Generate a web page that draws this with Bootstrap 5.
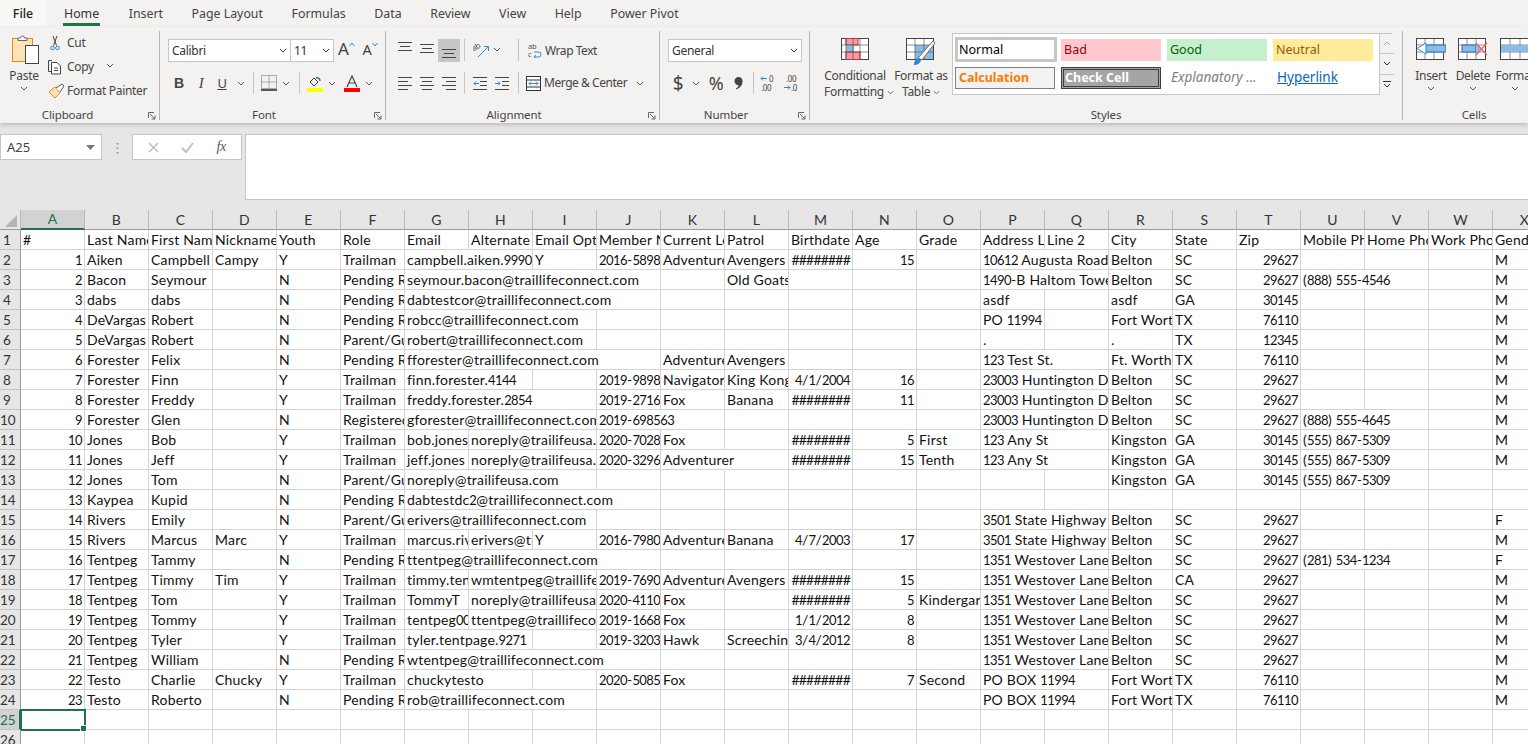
<!DOCTYPE html>
<html lang="en">
<head>
<meta charset="utf-8">
<title>Excel</title>
<link href="https://cdn.jsdelivr.net/npm/bootstrap@5.3.0/dist/css/bootstrap.min.css" rel="stylesheet">
<style>
html,body{height:744px;overflow:hidden}
body{background:#e6e6e6;font-family:"Noto Sans","Open Sans",sans-serif;font-size:12px;color:#444;letter-spacing:-.3px;line-height:16px}
svg{display:block;flex:none}
.tabs{height:27px;background:#f3f2f1;gap:28.6px;padding-left:63px;position:relative}
.tab{font-size:12.35px;letter-spacing:0;line-height:27px;height:26px;color:#444;white-space:nowrap}
.tab-file{margin-left:-63px;width:46px;text-align:center;background:#f9f8f7;color:#222;font-weight:500;margin-right:-11.600px}
.tab-home{border-bottom:3px solid #217346;height:26px;color:#333;padding:0 1px}
.ribbon{height:96px;background:#f3f2f1;box-shadow:0 2px 4px rgba(0,0,0,.18);padding-top:4px;position:relative}
.rg{position:relative;height:89px;border-right:1px solid #b8b6b4;flex:none}
.rg-clip{width:160px}.rg-font{width:226px}.rg-align{width:274px}.rg-num{width:150px}.rg-style{width:593px}.rg-cell{width:142px;border-right:0}
.cap{position:absolute;left:0;right:0;bottom:-3px;text-align:center;font-size:11.5px;letter-spacing:-.1px;line-height:16px;color:#444}
.cap-l{right:17px}.cap-c{right:24px}
.launch{position:absolute;right:3px;bottom:0}
.paste{width:48px;padding-top:4px;text-align:center}
.paste svg{margin:0 auto 2px 12px}
.paste svg.vchev{margin:2px auto 0}
.vchev{margin:2px auto 0}
.clip-list{padding-top:4px}
.clip-item{height:24px;gap:4px;white-space:nowrap}
.clip-item .slot{width:15px}
.fbox{background:#fff;border:1px solid #c8c6c4;height:23px;color:#333;line-height:21px;padding:0 3px;justify-content:space-between;align-items:center}
.b-font{width:123px;margin-left:8px}.b-size{width:43px;margin-left:0;border-left:0}
.b-gen{width:134px;margin-left:8px}
.row1{padding-top:8px;height:40px}
.row2{height:24px;align-items:center}
.ga-big{font-size:17px;line-height:20px;margin-left:4px;color:#444}
.ga-small{font-size:14.5px;line-height:20px;margin-left:8px;color:#444}
.ga-c{margin-top:3px}
.bold-b{font-weight:700;font-family:"Liberation Sans",sans-serif;font-size:14px;color:#444}
.it-i{font-style:italic;font-family:"Liberation Serif",serif;font-size:15px;color:#444}
.ul-u{text-decoration:underline;font-size:13px;color:#444}
.vsep{width:1px;height:22px;background:#c8c6c4;flex:none}
.font-tools{padding-left:8px}
.ft-b,.ft-i{width:22px;text-align:center}
.ft-u{width:20px;text-align:center}
.ft-c{margin-left:5px}
.ft-s{margin:0 7px 0 8px}
.ft-s2{margin:0 7px 0 9px}
.ft-a{margin-left:8px}
.sel-btn{background:#c6c6c6;width:22px;height:23px;justify-content:center}
.al-cell{width:22px;height:23px;align-items:center;justify-content:center}
.al-row{padding-left:8px}
.al-t{padding-top:3px;align-items:flex-start}
.al-m{padding-top:5px;align-items:flex-start}
.al-b{padding-top:10px;align-items:flex-start}
.al-s1{margin:0 8px 0 4px}
.al-ch{margin:8px 0 0 3px}
.al-s2{margin:0 9px 0 17px}
.al-s3{margin:0 7px 0 9px}
.al-wrap{height:23px;align-items:center;white-space:nowrap}
.al-txt{margin-left:3px;letter-spacing:-.45px}
.al-ch2{margin-left:9px}
.num-tools{padding-left:8px}
.nt-d{width:20px;text-align:center;font-size:19px;line-height:20px}
.nt-c{margin-left:4px}
.nt-p{width:24px;margin-left:4px;text-align:center;font-size:18px;line-height:20px}
.nt-k{width:20px}
.nt-k svg{margin:0 auto}
.nt-s{margin:0 6px 0 5px}
.nt-2{margin-left:7px}
.big{text-align:center;line-height:16px;white-space:nowrap;flex:none;padding-top:7px}
.big svg{margin:0 auto 8px}
.big svg.d-inline{margin:0 0 1px;display:inline}
.st-cf{width:62px;margin-left:14px}
.st-ft{width:62px;margin-left:4px}
.st-ft svg.tall{margin:0 auto 2px}
.cl-b{width:42px}
.cl-first{margin-left:7px}
.cl-b svg.vchev{margin:2px auto 0}
.gallery{width:440px;height:62px;background:#fff;border:1px solid #c8c6c4;margin-top:2px;position:relative}
.gcol{padding:3px 0 0 2px;gap:5px}
.gtile{width:100px;height:22px;line-height:21px;font-size:12.5px;letter-spacing:0;padding-left:3px;flex:none;white-space:nowrap;overflow:hidden;margin-right:6px}
.g-normal{height:25px;width:102px;border:3px solid #c6c6c6;color:#000;line-height:19px;margin-right:4px;margin-top:0;padding-left:1px}
.g-bad{background:#ffc7ce;color:#9c0006;margin-top:2px}
.g-good{background:#c6efce;color:#006100;margin-top:2px}
.g-neutral{background:#ffeb9c;color:#9c5700;margin-top:2px;margin-right:0}
.g-calc{background:#f2f2f2;border:1px solid #7f7f7f;color:#fa7d00;font-weight:700;line-height:19px}
.g-check{background:#a5a5a5;border:3px double #3f3f3f;color:#fff;font-weight:700;line-height:15px;padding-left:1px}
.g-expl{color:#7f7f7f;font-style:italic;font-size:13.5px;padding-left:4px}
.g-link{color:#0563c1;text-decoration:underline;font-size:13.5px;padding-left:4px}
.gscroll{width:15px;margin-left:auto;flex:none;border-left:1px solid #c8c6c4}
.gs{height:20.3px;background:#f3f2f1;border-bottom:1px solid #c8c6c4;display:flex;align-items:center;justify-content:center}
.gs:last-child{border-bottom:0}
.fbar{height:87px;padding-top:11px;flex:none}
.namebox{width:102px;height:26px;background:#fff;border:1px solid #c8c6c4;padding:0 6px;line-height:24px;font-size:13px;letter-spacing:0;color:#444;justify-content:space-between;align-items:center}
.fdots{width:30px;justify-content:center;padding-top:8px}
.fbtns{width:110px;height:26px;background:#fff;border:1px solid #c8c6c4;justify-content:space-around;align-items:center;padding:0 4px}
.fx{font-family:"Liberation Serif",serif;font-style:italic;font-size:14px;color:#555}
.finput{flex:1;height:66px;margin-left:3px;background:#fff;border:1px solid #c8c6c4;border-right:0}
.sheetwrap{overflow:hidden;height:534px;background:#fff;width:1528px}
.sheet{table-layout:fixed;width:1557px;border-collapse:separate;border-spacing:0;font-family:Lato,sans-serif;font-size:14px;letter-spacing:.2px;color:#111;line-height:18px}
.sheet col.rh{width:21px}.sheet col.cc{width:64px}
.sheet th{height:20px;background:#e6e6e6;font-weight:400;text-align:center;color:#333;border-right:1px solid #b9b9b9;border-bottom:1px solid #9c9c9c;padding:0;font-size:14px;overflow:hidden;position:relative}
.sheet tbody th{border-bottom:1px solid #c4c4c4;border-right:1px solid #9c9c9c;font-size:13.5px;letter-spacing:0;padding-right:6px}
.sheet td{height:20px;padding:0 3px 0 2px;border-right:1px solid #d4d4d4;border-bottom:1px solid #d4d4d4;white-space:nowrap;overflow:hidden;background:#fff}
.sheet td.num{text-align:right;padding-right:2px}
.dg{font-size:13px;letter-spacing:-.55px}
.sheet th.on{background:#d2d2d2;color:#217346}
.sheet thead th.on{border-bottom:2px solid #217346}
.sheet tbody th.on{border-right:2px solid #217346}
.sheet td.cur{outline:2px solid #217346;outline-offset:-1px;overflow:visible;position:relative}
.handle{position:absolute;right:-3px;bottom:-3px;background:#217346;border:1px solid #fff;box-sizing:content-box;width:5px;height:5px}
.corner{width:0;height:0;border-left:12px solid transparent;border-bottom:12px solid #b4b4b4;margin:3px 0 0 5px}
.hsh{letter-spacing:-.8px}
</style>
</head>
<body>
<div class="d-flex tabs">
  <div class="tab tab-file">File</div>
  <div class="tab tab-home">Home</div>
  <div class="tab">Insert</div>
  <div class="tab">Page Layout</div>
  <div class="tab">Formulas</div>
  <div class="tab">Data</div>
  <div class="tab">Review</div>
  <div class="tab">View</div>
  <div class="tab">Help</div>
  <div class="tab">Power Pivot</div>
</div>

<div class="d-flex ribbon">
  <!-- Clipboard -->
  <div class="rg rg-clip d-flex">
    <div class="paste">
      <svg width="28" height="31" viewBox="0 0 28 31"><rect x=".5" y="3.500" width="20" height="23" fill="#fbe3b5" stroke="#d98a2b"/><path d="M6 5.500V3h2.500a2 2 0 0 1 4 0H15v2.500z" fill="#fff" stroke="#666"/><rect x="13.500" y="10.500" width="13" height="18" fill="#fff" stroke="#444"/></svg>
      <div>Paste</div>
      <svg class="vchev" width="8" height="5" viewBox="0 0 8 5"><path d="M1 1l3 3 3-3" fill="none" stroke="#555"/></svg>
    </div>
    <div class="clip-list">
      <div class="d-flex clip-item"><span class="slot"><svg width="14" height="16" viewBox="0 0 14 16"><path d="M5 1l3.500 9.500M9 1L5.500 10.500" stroke="#444" fill="none"/><circle cx="4.500" cy="13" r="1.800" fill="none" stroke="#2b88d8"/><circle cx="9.500" cy="13" r="1.800" fill="none" stroke="#2b88d8"/></svg></span>Cut</div>
      <div class="d-flex clip-item"><span class="slot"><svg width="16" height="16" viewBox="0 0 16 16"><path d="M4 1.500H.5V12.500H3.500" fill="none" stroke="#444"/><path d="M3.500 3.500H9l3.500 3.500v8h-9z" fill="#fff" stroke="#444"/><path d="M6 9h4M6 11.500h4" stroke="#444"/></svg></span>Copy<svg class="ms-2 mt-1" width="8" height="5" viewBox="0 0 8 5"><path d="M1 1l3 3 3-3" fill="none" stroke="#555"/></svg></div>
      <div class="d-flex clip-item"><span class="slot"><svg width="17" height="16" viewBox="0 0 17 16"><path d="M1 9l6-5 5 6-5 5z" fill="#fbe3b5" stroke="#d98a2b"/><path d="M8 5l6-4 2 2-4 6" fill="#fff" stroke="#555"/></svg></span>Format Painter</div>
    </div>
    <div class="cap cap-c">Clipboard</div>
    <svg class="launch" width="8" height="8" viewBox="0 0 8 8"><path d="M.5 6V.5H6M2 2l5 5M7 3.500V7H3.500" fill="none" stroke="#666"/></svg>
  </div>
  <!-- Font -->
  <div class="rg rg-font">
    <div class="d-flex row1">
      <div class="d-flex fbox b-font"><span>Calibri</span><svg width="8" height="5" viewBox="0 0 8 5"><path d="M1 1l3 3 3-3" fill="none" stroke="#333"/></svg></div>
      <div class="d-flex fbox b-size"><span>11</span><svg width="8" height="5" viewBox="0 0 8 5"><path d="M1 1l3 3 3-3" fill="none" stroke="#333"/></svg></div>
      <span class="ga-big">A</span><svg class="ga-c" width="6" height="5" viewBox="0 0 6 5"><path d="M.5 4l2.500-3 2.500 3" fill="none" stroke="#2b88d8"/></svg>
      <span class="ga-small">A</span><svg class="ga-c" width="6" height="5" viewBox="0 0 6 5"><path d="M.5 1l2.500 3 2.500-3" fill="none" stroke="#2b88d8"/></svg>
    </div>
    <div class="d-flex row2 font-tools">
      <span class="bold-b ft-b">B</span><span class="it-i ft-i">I</span><span class="ul-u ft-u">U</span>
      <svg class="ft-c" width="8" height="5" viewBox="0 0 8 5"><path d="M1 1l3 3 3-3" fill="none" stroke="#555"/></svg>
      <span class="vsep ft-s"></span>
      <svg width="16" height="16" viewBox="0 0 16 16"><path d="M.5.500h15v13H.5zM8 .500v13M.5 7h15" stroke="#666" stroke-dasharray="1 1" fill="none"/><path d="M0 15h16" stroke="#222" stroke-width="1.500"/></svg>
      <svg class="ft-c" width="8" height="5" viewBox="0 0 8 5"><path d="M1 1l3 3 3-3" fill="none" stroke="#555"/></svg>
      <span class="vsep ft-s2"></span>
      <svg width="16" height="17" viewBox="0 0 16 17"><path d="M3 7l4-4 4 4-4 4z" fill="none" stroke="#444"/><path d="M9 3a3 3 0 0 1 4 3" stroke="#2b6cb0" fill="none" stroke-width="1.500"/><rect y="13" width="16" height="4" fill="#ffff00"/></svg>
      <svg class="ft-c" width="8" height="5" viewBox="0 0 8 5"><path d="M1 1l3 3 3-3" fill="none" stroke="#555"/></svg>
      <svg class="ft-a" width="16" height="17" viewBox="0 0 16 17"><path d="M3 12L8 1l5 11M5 8h6" fill="none" stroke="#444" stroke-width="1.200"/><rect y="13" width="16" height="4" fill="#f00"/></svg>
      <svg class="ft-c" width="8" height="5" viewBox="0 0 8 5"><path d="M1 1l3 3 3-3" fill="none" stroke="#555"/></svg>
    </div>
    <div class="cap cap-l">Font</div>
    <svg class="launch" width="8" height="8" viewBox="0 0 8 8"><path d="M.5 6V.5H6M2 2l5 5M7 3.500V7H3.500" fill="none" stroke="#666"/></svg>
  </div>
  <!-- Alignment -->
  <div class="rg rg-align">
    <div class="d-flex row1 al-row">
      <div class="d-flex al-cell al-t"><svg width="14" height="9" viewBox="0 0 14 9"><path d="M0 .5h14M2 4.500h10M0 8.500h14" stroke="#444"/></svg></div>
      <div class="d-flex al-cell al-m"><svg width="14" height="9" viewBox="0 0 14 9"><path d="M0 .5h14M2 4.500h10M0 8.500h14" stroke="#444"/></svg></div>
      <div class="d-flex sel-btn al-b"><svg width="14" height="9" viewBox="0 0 14 9"><path d="M0 .5h14M2 4.500h10M0 8.500h14" stroke="#444"/></svg></div>
      <span class="vsep al-s1"></span>
      <svg class="mt-1" width="17" height="15" viewBox="0 0 17 15"><text x="0" y="7" font-size="8" fill="#555" transform="rotate(-30 3 7)">ab</text><path d="M5 14L15 4M11 3.500h4.500V8" stroke="#2b88d8" fill="none"/></svg>
      <svg class="al-ch" width="8" height="5" viewBox="0 0 8 5"><path d="M1 1l3 3 3-3" fill="none" stroke="#555"/></svg>
      <span class="vsep al-s2"></span>
      <div class="d-flex al-wrap"><svg width="14" height="15" viewBox="0 0 14 15"><text x="0" y="6" font-size="7.500" fill="#555">ab</text><text x="0" y="14" font-size="7.500" fill="#555">c</text><path d="M6 14h4.500a2.500 2.500 0 0 0 0-5H6M8 12l-2 2 2 1.500" stroke="#2b88d8" fill="none"/></svg><span class="al-txt">Wrap Text</span></div>
    </div>
    <div class="d-flex row2 al-row">
      <div class="d-flex al-cell"><svg width="14" height="13" viewBox="0 0 14 13"><path d="M0 .5h14M0 4.500h10M0 8.500h14M0 12.500h10" stroke="#444"/></svg></div>
      <div class="d-flex al-cell"><svg width="14" height="13" viewBox="0 0 14 13"><path d="M0 .5h14M2 4.500h10M0 8.500h14M2 12.500h10" stroke="#444"/></svg></div>
      <div class="d-flex al-cell"><svg width="14" height="13" viewBox="0 0 14 13"><path d="M0 .5h14M4 4.500h10M0 8.500h14M4 12.500h10" stroke="#444"/></svg></div>
      <span class="vsep al-s1"></span>
      <svg width="14" height="13" viewBox="0 0 14 13"><path d="M0 .5h14M0 12.500h14M7 4.500h7M7 8.500h7" stroke="#444"/><path d="M6 6.500H1M3 4.500l-2 2 2 2" stroke="#2b88d8" fill="none"/></svg>
      <svg class="ms-2" width="14" height="13" viewBox="0 0 14 13"><path d="M0 .5h14M0 12.500h14M7 4.500h7M7 8.500h7" stroke="#444"/><path d="M0 6.500h5M3 4.500l2 2-2 2" stroke="#2b88d8" fill="none"/></svg>
      <span class="vsep al-s3"></span>
      <div class="d-flex align-items-center"><svg width="15" height="15" viewBox="0 0 15 15"><rect x=".5" y=".5" width="14" height="14" fill="#fff" stroke="#333"/><path d="M.5 4h14M.5 11h14" stroke="#333"/><path d="M3 7.500h9M5 5.500l-2 2 2 2M10 5.500l2 2-2 2" stroke="#2b88d8" fill="none"/></svg><span class="al-txt">Merge &amp; Center</span><svg class="al-ch2" width="8" height="5" viewBox="0 0 8 5"><path d="M1 1l3 3 3-3" fill="none" stroke="#555"/></svg></div>
    </div>
    <div class="cap cap-l">Alignment</div>
    <svg class="launch" width="8" height="8" viewBox="0 0 8 8"><path d="M.5 6V.5H6M2 2l5 5M7 3.500V7H3.500" fill="none" stroke="#666"/></svg>
  </div>
  <!-- Number -->
  <div class="rg rg-num">
    <div class="d-flex row1">
      <div class="d-flex fbox b-gen"><span>General</span><svg width="8" height="5" viewBox="0 0 8 5"><path d="M1 1l3 3 3-3" fill="none" stroke="#333"/></svg></div>
    </div>
    <div class="d-flex row2 num-tools">
      <span class="nt-d">$</span>
      <svg class="nt-c" width="8" height="5" viewBox="0 0 8 5"><path d="M1 1l3 3 3-3" fill="none" stroke="#555"/></svg>
      <span class="nt-p">%</span>
      <span class="nt-k"><svg width="9" height="13" viewBox="0 0 9 13"><path d="M4.500 0a4 4 0 0 1 4 4.500C8.500 8 6 11 2.500 12.500L2 11.500c1.500-1 2.500-2 2.800-3.200A4 4 0 0 1 4.500 0z" fill="#444"/></svg></span>
      <span class="vsep nt-s"></span>
      <svg width="16" height="17" viewBox="0 0 16 17"><path d="M7 3.500H1M3 1.500l-2 2 2 2" stroke="#2b88d8" fill="none"/><text x="9" y="7" font-size="8" fill="#444">0</text><text x="1" y="16" font-size="8" fill="#444">.00</text></svg>
      <svg class="nt-2" width="16" height="17" viewBox="0 0 16 17"><text x="3" y="7" font-size="8" fill="#444">.00</text><path d="M1 12.500h6M5 10.500l2 2-2 2" stroke="#2b88d8" fill="none"/><text x="8" y="16" font-size="8" fill="#444">.0</text></svg>
    </div>
    <div class="cap cap-l">Number</div>
    <svg class="launch" width="8" height="8" viewBox="0 0 8 8"><path d="M.5 6V.5H6M2 2l5 5M7 3.500V7H3.500" fill="none" stroke="#666"/></svg>
  </div>
  <!-- Styles -->
  <div class="rg rg-style d-flex">
    <div class="big st-cf">
      <svg width="28" height="22" viewBox="0 0 28 22"><rect x=".5" y=".5" width="27" height="21" fill="#fff" stroke="#444"/><rect x="5" y=".5" width="12" height="6.500" fill="#f79aa1" stroke="#c33"/><rect x="5" y="7" width="8" height="7" fill="#8bbce8"/><rect x="5" y="14" width="14" height="7.500" fill="#f79aa1" stroke="#c33"/><path d="M5 0v22M12 0v22M19 0v22M1 7h26M1 14h26" stroke="#444" fill="none" stroke-width=".6"/></svg>
      <div>Conditional</div><div>Formatting <svg class="d-inline" width="7" height="5" viewBox="0 0 8 5"><path d="M1 1l3 3 3-3" fill="none" stroke="#555"/></svg></div>
    </div>
    <div class="big st-ft">
      <svg class="tall" width="30" height="28" viewBox="0 0 30 28"><rect x=".5" y=".5" width="27" height="21" fill="#fff" stroke="#444"/><rect x="9" y="7" width="18" height="14" fill="#8bbce8"/><path d="M9 0v22M18 0v22M1 7h26M1 14h26" stroke="#444" stroke-width=".6"/><path d="M12 20L27 3l2 2-13 17z" fill="#fff" stroke="#666"/><path d="M8 27c3 0 6-1 7-5l-3-2c-3 1-4 4-4 7z" fill="#2b88d8"/></svg>
      <div>Format as</div><div>Table <svg class="d-inline" width="7" height="5" viewBox="0 0 8 5"><path d="M1 1l3 3 3-3" fill="none" stroke="#555"/></svg></div>
    </div>
    <div class="gallery d-flex">
      <div class="d-flex flex-column gcol">
        <div class="d-flex">
          <div class="gtile g-normal">Normal</div><div class="gtile g-bad">Bad</div><div class="gtile g-good">Good</div><div class="gtile g-neutral">Neutral</div>
        </div>
        <div class="d-flex">
          <div class="gtile g-calc">Calculation</div><div class="gtile g-check">Check Cell</div><div class="gtile g-expl">Explanatory ...</div><div class="gtile g-link"><span>Hyperlink</span></div>
        </div>
      </div>
      <div class="gscroll">
        <div class="gs"><svg width="8" height="5" viewBox="0 0 8 5"><path d="M1 4l3-3 3 3" fill="none" stroke="#aaa"/></svg></div>
        <div class="gs"><svg width="8" height="5" viewBox="0 0 8 5"><path d="M1 1l3 3 3-3" fill="none" stroke="#333"/></svg></div>
        <div class="gs"><svg width="8" height="7" viewBox="0 0 8 7"><path d="M0 .5h8M1 3l3 3 3-3" fill="none" stroke="#333"/></svg></div>
      </div>
    </div>
    <div class="cap">Styles</div>
  </div>
  <!-- Cells -->
  <div class="rg rg-cell d-flex">
    <div class="big cl-b cl-first">
      <svg width="30" height="22" viewBox="0 0 30 22"><rect x=".5" y=".5" width="27" height="21" fill="#fff" stroke="#444"/><path d="M9 0v22M18 0v22M1 7h26M1 14h26" stroke="#444" stroke-width=".6"/><rect x="8" y="7" width="22" height="7" fill="#8bbce8" stroke="#1f6fb5"/><path d="M10 5L1 10.500 10 16z" fill="#fff" stroke="#2b88d8"/></svg>
      <div>Insert</div><svg class="vchev" width="8" height="5" viewBox="0 0 8 5"><path d="M1 1l3 3 3-3" fill="none" stroke="#555"/></svg>
    </div>
    <div class="big cl-b">
      <svg width="30" height="22" viewBox="0 0 30 22"><rect x=".5" y=".5" width="27" height="21" fill="#fff" stroke="#444"/><path d="M9 0v22M18 0v22M1 7h26M1 14h26" stroke="#444" stroke-width=".6"/><rect x="4" y="7" width="14" height="7" fill="#8bbce8" stroke="#1f6fb5"/><path d="M18 5l5 5.500-5 5.500z" fill="#8bbce8"/><path d="M18 5l11 12M29 5L18 17" stroke="#f55" stroke-width="1.200"/></svg>
      <div>Delete</div><svg class="vchev" width="8" height="5" viewBox="0 0 8 5"><path d="M1 1l3 3 3-3" fill="none" stroke="#555"/></svg>
    </div>
    <div class="big cl-b">
      <svg width="30" height="22" viewBox="0 0 30 22"><rect x=".5" y=".5" width="29" height="21" fill="#fff" stroke="#444"/><path d="M10 0v22M20 0v22M1 7h28M1 14h28" stroke="#444" stroke-width=".6"/><rect x="1" y="7" width="29" height="7" fill="#8bbce8"/></svg>
      <div>Format</div><svg class="vchev" width="8" height="5" viewBox="0 0 8 5"><path d="M1 1l3 3 3-3" fill="none" stroke="#555"/></svg>
    </div>
    <div class="cap">Cells</div>
  </div>
</div>

<div class="d-flex fbar">
  <div class="d-flex namebox"><span>A25</span><svg width="9" height="5" viewBox="0 0 9 5"><path d="M0 0h9L4.500 5z" fill="#777"/></svg></div>
  <div class="d-flex fdots"><svg width="3" height="12" viewBox="0 0 3 12"><path d="M1.500 1v1.500M1.500 5.500V7M1.500 10v1.500" stroke="#999" stroke-width="2"/></svg></div>
  <div class="d-flex fbtns">
    <svg width="11" height="11" viewBox="0 0 11 11"><path d="M1 1l9 9M10 1l-9 9" stroke="#c0c0c0" stroke-width="1.500"/></svg>
    <svg width="13" height="11" viewBox="0 0 13 11"><path d="M1 6l4 4 7-9" stroke="#c0c0c0" stroke-width="2" fill="none"/></svg>
    <span class="fx">fx</span>
  </div>
  <div class="finput"></div>
</div>

<div class="sheetwrap">
  <table class="sheet" id="sheet"></table>
</div>

<script>
const L="ABCDEFGHIJKLMNOPQRSTUVWX".split("");
const HD="1351 Westover Lane^2|Belton|SC|29627||||M";
const H3="23003 Huntington Dr^2|Belton|SC|29627";
const rows=[
"#|Last Name|First Name|Nickname|Youth|Role|Email|Alternate|Email Opt|Member N|Current Le|Patrol|Birthdate|Age|Grade|Address Li|Line 2|City|State|Zip|Mobile Ph|Home Pho|Work Pho|Gender",
"1|Aiken|Campbell|Campy|Y|Trailman|campbell.aiken.9990^2|Y|2016-5898|Adventurer|Avengers|########|15||10612 Augusta Road^2|Belton|SC|29627||||M",
"2|Bacon|Seymour||N|Pending R|seymour.bacon@traillifeconnect.com^4||Old Goats||||1490-B Haltom Towers^2|Belton|SC|29627|(888) 555-4546^2||M",
"3|dabs|dabs||N|Pending R|dabtestcor@traillifeconnect.com^4||||||asdf||asdf|GA|30145||||M",
"4|DeVargas|Robert||N|Pending R|robcc@traillifeconnect.com^3|||||||PO 11994||Fort Worth|TX|76110||||M",
"5|DeVargas|Robert||N|Parent/Gu|robert@traillifeconnect.com^3|||||||.||.|TX|12345||||M",
"6|Forester|Felix||N|Pending R|fforester@traillifeconnect.com^4|Adventurer|Avengers||||123 Test St.^2|Ft. Worth|TX|76110||||M",
"7|Forester|Finn||Y|Trailman|finn.forester.4144^2||2019-9898|Navigator|King Kong|4/1/2004|16||"+H3+"||||M",
"8|Forester|Freddy||Y|Trailman|freddy.forester.2854^3|2019-2716|Fox|Banana|########|11||"+H3+"||||M",
"9|Forester|Glen||N|Registered|gforester@traillifeconnect.com^3|2019-698563^2|||||"+H3+"|(888) 555-4645^2||M",
"10|Jones|Bob||Y|Trailman|bob.jones|noreply@trailifeusa.com^2|2020-7028|Fox||########|5|First|123 Any St^2|Kingston|GA|30145|(555) 867-5309^2||M",
"11|Jones|Jeff||Y|Trailman|jeff.jones|noreply@trailifeusa.com^2|2020-3296|Adventurer^2|########|15|Tenth|123 Any St^2|Kingston|GA|30145|(555) 867-5309^2||M",
"12|Jones|Tom||N|Parent/Gu|noreply@trailifeusa.com^3|||||||||Kingston|GA|30145|(555) 867-5309^2",
"13|Kaypea|Kupid||N|Pending R|dabtestdc2@traillifeconnect.com^4",
"14|Rivers|Emily||N|Parent/Gu|erivers@traillifeconnect.com^3|||||||3501 State Highway 121^2|Belton|SC|29627||||F",
"15|Rivers|Marcus|Marc|Y|Trailman|marcus.rivers|erivers@traillifeconnect.com|Y|2016-7980|Adventurer|Banana|4/7/2003|17||3501 State Highway 121^2|Belton|SC|29627||||M",
"16|Tentpeg|Tammy||N|Pending R|ttentpeg@traillifeconnect.com^4||||||1351 Westover Lane^2|Belton|SC|29627|(281) 534-1234^2||F",
"17|Tentpeg|Timmy|Tim|Y|Trailman|timmy.tentpeg|wmtentpeg@traillifeconnect.com^2|2019-7690|Adventurer|Avengers|########|15||1351 Westover Lane^2|Belton|CA|29627||||M",
"18|Tentpeg|Tom||Y|Trailman|TommyT|noreply@traillifeusa.com^2|2020-4110|Fox||########|5|Kindergarten|"+HD,
"19|Tentpeg|Tommy||Y|Trailman|tentpeg00|ttentpeg@traillifeconnect.com^2|2019-1668|Fox||1/1/2012|8||"+HD,
"20|Tentpeg|Tyler||Y|Trailman|tyler.tentpage.9271^2||2019-3203|Hawk|Screeching|3/4/2012|8||"+HD,
"21|Tentpeg|William||N|Pending R|wtentpeg@traillifeconnect.com^4||||||"+HD,
"22|Testo|Charlie|Chucky|Y|Trailman|chuckytesto^2||2020-5085|Fox||########|7|Second|PO BOX 11994^2|Fort Worth|TX|76110||||M",
"23|Testo|Roberto||N|Pending R|rob@traillifeconnect.com^3|||||||PO BOX 11994^2|Fort Worth|TX|76110||||M",
"",""];
const t=document.getElementById("sheet");
const cg=document.createElement("colgroup");
cg.innerHTML='<col class="rh">'+L.map(()=>'<col class="cc">').join("");
t.appendChild(cg);
const th=t.createTHead().insertRow();
th.innerHTML='<th><div class="corner"></div></th>'+L.map((c,i)=>`<th class="${i==0?"on":""}">${c}</th>`).join("");
const tb=t.createTBody();
rows.forEach((r,ri)=>{
  const tr=tb.insertRow(),cur=ri==24;
  const h=document.createElement("th");h.textContent=ri+1;if(cur)h.className="on";tr.appendChild(h);
  let col=0;
  (r?r.split("|"):[]).forEach(v=>{
    let[x,s]=v.split("^");s=+s||1;
    const td=tr.insertCell();if(s>1)td.colSpan=s;
    if(/^#{8}$/.test(x)){td.textContent=x;td.className="num hsh";}
    else{td.innerHTML=x.replace(/&/g,"&amp;").replace(/\d+/g,'<span class="dg">$&</span>');
      if(/^\d+$/.test(x)||/^\d+\/\d+\/\d+$/.test(x))td.className="num";}
    col+=s;
  });
  while(col<24){
    const td=tr.insertCell();
    if(cur&&col==0){td.className="cur";td.innerHTML='<span class="handle"></span>';}
    col++;
  }
});
</script>
<script src="https://cdn.jsdelivr.net/npm/bootstrap@5.3.0/dist/js/bootstrap.bundle.min.js"></script>
</body>
</html>
